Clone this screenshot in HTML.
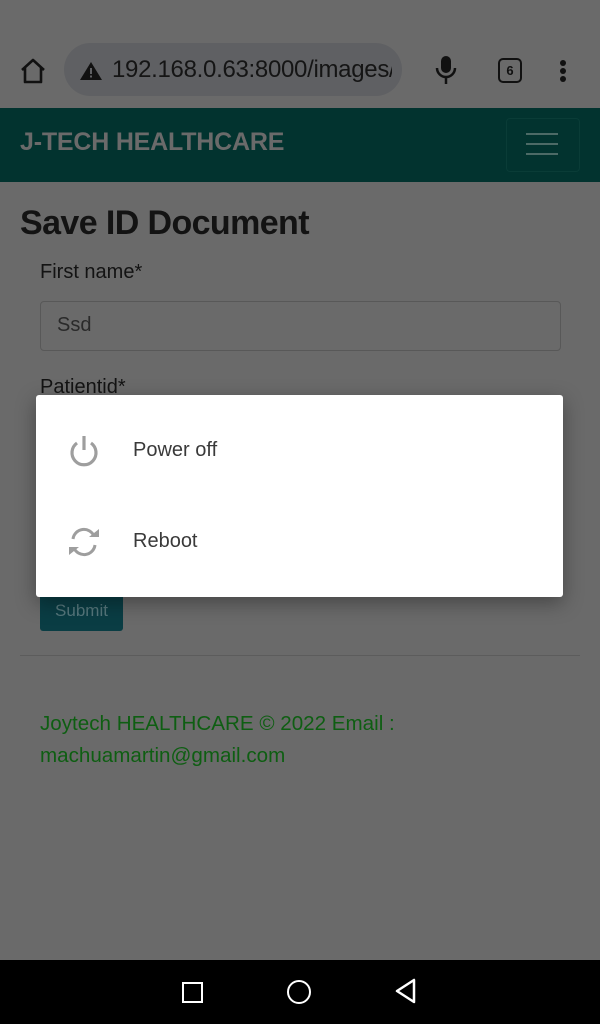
<!DOCTYPE html>
<html><head><style>
body{margin:0;width:600px;height:1024px;background:#6a6a6a;font-family:"Liberation Sans",sans-serif;position:relative;overflow:hidden}
.a{position:absolute}
</style></head><body>
<div class="a" style="left:64px;top:43px;width:338px;height:53px;border-radius:27px;background:#5f6063"></div>
<svg class="a" style="left:18px;top:56px" width="30" height="30" viewBox="0 0 30 30"><path d="M4 14 L15 4 L26 14 M7 12 V26 H23 V12" fill="none" stroke="#111" stroke-width="2.6" stroke-linejoin="round"/></svg>
<svg class="a" style="left:80px;top:62px" width="22" height="18" viewBox="0 0 22 18"><path d="M11 0 L22 18 H0Z" fill="#111"/><rect x="10" y="6" width="2" height="6" fill="#5f6063"/><rect x="10" y="13.5" width="2" height="2" fill="#5f6063"/></svg>
<div class="a" style="left:112px;top:56px;font-size:24px;color:#151515;white-space:nowrap;width:280px;overflow:hidden;letter-spacing:-0.3px">192.168.0.63:8000/images/</div>
<svg class="a" style="left:434px;top:55px" width="24" height="30" viewBox="0 0 24 30"><rect x="7" y="1" width="10" height="17" rx="5" fill="#111"/><path d="M3 13 a9 9 0 0 0 18 0 M12 22 V29" fill="none" stroke="#111" stroke-width="2.5"/></svg>
<div class="a" style="left:498px;top:58px;width:20px;height:21px;border:2.5px solid #111;border-radius:5px;font-size:13px;font-weight:bold;text-align:center;line-height:21px;color:#111">6</div>
<div class="a" style="left:560px;top:60px;width:6px;height:6px;border-radius:3px;background:#111;box-shadow:0 8px 0 #111,0 16px 0 #111"></div>
<div class="a" style="left:0;top:108px;width:600px;height:74px;background:#02332f"></div>
<div class="a" style="left:20px;top:128px;font-size:25px;font-weight:bold;color:#6a6a6a;letter-spacing:-0.2px">J-TECH HEALTHCARE</div>
<div class="a" style="left:506px;top:118px;width:72px;height:52px;border:1px solid #0a3c37;border-radius:4px"></div>
<div class="a" style="left:526px;top:133px;width:32px;height:2px;background:#4c6a66;box-shadow:0 10px 0 #4c6a66,0 20px 0 #4c6a66"></div>
<div class="a" style="left:20px;top:204px;font-size:34px;font-weight:bold;color:#131313;letter-spacing:-0.6px">Save ID Document</div>
<div class="a" style="left:40px;top:261px;font-size:20px;color:#131313">First name*</div>
<div class="a" style="left:40px;top:301px;width:519px;height:48px;border:1px solid #585858;border-radius:4px"></div>
<div class="a" style="left:57px;top:314px;font-size:20px;color:#2a2a2a">Ssd</div>
<div class="a" style="left:40px;top:376px;font-size:20px;color:#131313">Patientid*</div>
<div class="a" style="left:40px;top:593px;width:83px;height:38px;background:#0a3d44;border-radius:3px;color:#56777c;font-size:17px;text-align:center;line-height:36px">Submit</div>
<div class="a" style="left:20px;top:655px;width:560px;height:1px;background:#5c5c5c"></div>
<div class="a" style="left:40px;top:708px;font-size:20.6px;line-height:32px;color:#0e5e12">Joytech HEALTHCARE © 2022 Email :<br>machuamartin@gmail.com</div>
<div class="a" style="left:36px;top:395px;width:527px;height:202px;background:#fff;border-radius:3px;box-shadow:0 6px 20px rgba(0,0,0,.35)"></div>
<svg class="a" style="left:68px;top:434px" width="32" height="34" viewBox="0 0 32 34"><path d="M9 9 A12 12 0 1 0 23 9" fill="none" stroke="#9e9e9e" stroke-width="3.2"/><path d="M16 2 V16" stroke="#9e9e9e" stroke-width="3.2"/></svg>
<div class="a" style="left:133px;top:439px;font-size:20px;color:#3a3a3a">Power off</div>
<svg class="a" style="left:66px;top:525px" width="36" height="34" viewBox="0 0 36 34"><path d="M7 14 A11 11 0 0 1 28 11" fill="none" stroke="#9e9e9e" stroke-width="3"/><path d="M29 20 A11 11 0 0 1 8 23" fill="none" stroke="#9e9e9e" stroke-width="3"/><path d="M23 12 H33 V4Z" fill="#9e9e9e"/><path d="M13 22 H3 V30Z" fill="#9e9e9e"/></svg>
<div class="a" style="left:133px;top:530px;font-size:20px;color:#3a3a3a">Reboot</div>
<div class="a" style="left:0;top:960px;width:600px;height:64px;background:#000"></div>
<div class="a" style="left:182px;top:982px;width:17px;height:17px;border:2.5px solid #fff"></div>
<div class="a" style="left:287px;top:980px;width:20px;height:20px;border:2.5px solid #fff;border-radius:50%"></div>
<svg class="a" style="left:394px;top:978px" width="24" height="26" viewBox="0 0 24 26"><path d="M20 2 V24 L3 13Z" fill="none" stroke="#fff" stroke-width="2.5" stroke-linejoin="round"/></svg>
</body></html>
